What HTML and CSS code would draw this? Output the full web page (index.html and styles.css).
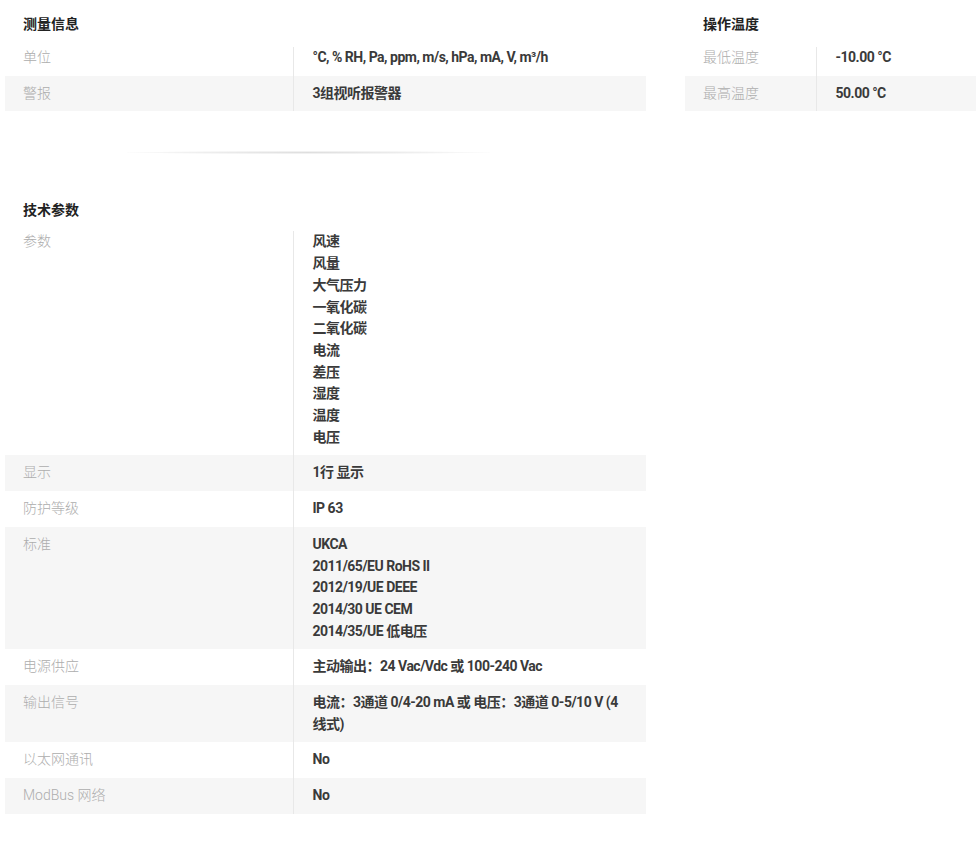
FILE: index.html
```html
<!DOCTYPE html>
<html lang="zh">
<head>
  <meta charset="UTF-8">
  <title>技术参数</title>
  <link rel="stylesheet" href="styles.css">
</head>
<body>
  <div class="page">
    <div class="top">
      <section class="spec">
        <h3>测量信息</h3>
        <table class="spec-table">
          <tr><td class="label">单位</td><td class="value">°C, % RH, Pa, ppm, m/s, hPa, mA, V, m³/h</td></tr>
          <tr><td class="label">警报</td><td class="value">3组视听报警器</td></tr>
        </table>
      </section>
      <section class="spec spec-side">
        <h3>操作温度</h3>
        <table class="spec-table">
          <tr><td class="label">最低温度</td><td class="value">-10.00 °C</td></tr>
          <tr><td class="label">最高温度</td><td class="value">50.00 °C</td></tr>
        </table>
      </section>
    </div>

    <div class="sep"></div>

    <section class="spec spec-main">
      <h3>技术参数</h3>
      <table class="spec-table">
        <tr>
          <td class="label">参数</td>
          <td class="value">风速<br>风量<br>大气压力<br>一氧化碳<br>二氧化碳<br>电流<br>差压<br>湿度<br>温度<br>电压</td>
        </tr>
        <tr><td class="label">显示</td><td class="value">1行 显示</td></tr>
        <tr><td class="label">防护等级</td><td class="value">IP 63</td></tr>
        <tr>
          <td class="label">标准</td>
          <td class="value">UKCA<br>2011/65/EU RoHS II<br>2012/19/UE DEEE<br>2014/30 UE CEM<br>2014/35/UE 低电压</td>
        </tr>
        <tr><td class="label">电源供应</td><td class="value">主动输出：24 Vac/Vdc 或 100-240 Vac</td></tr>
        <tr><td class="label">输出信号</td><td class="value">电流：3通道 0/4-20 mA 或 电压：3通道 0-5/10 V (4线式)</td></tr>
        <tr><td class="label">以太网通讯</td><td class="value">No</td></tr>
        <tr><td class="label">ModBus 网络</td><td class="value">No</td></tr>
      </table>
    </section>
  </div>
</body>
</html>
```

FILE: styles.css
```css
body { margin: 0; background: #fff; font-family: Roboto, "Noto Sans CJK SC", sans-serif; font-size: 13px; color: #333; }
.page { padding: 0 0 30px 5px; }
.top { display: grid; grid-template-columns: 641px 291px; column-gap: 39px; }
.spec h3 { margin: 14px 0 13px; padding-left: 18px; font-size: 14px; line-height: 20px; font-weight: 700; color: #222; }
.spec-main { width: 641px; }
.spec-main h3 { margin: 0 0 11px; }
.spec-table { width: 100%; border-collapse: collapse; table-layout: fixed; }
.spec-table td { padding: 7px 18px; line-height: 21.7px; vertical-align: top; }
.spec-table tr:first-child td { padding-top: 0; }
.spec-table tr:nth-child(even) td { background: #f6f6f6; }
.spec-table .label { width: 288px; box-sizing: border-box; color: #adadad; font-size: 14px; font-weight: 300; border-right: 1px solid #e8e8e8; }
.spec-table .value { padding-left: 19px; color: #3a3a3a; font-size: 14px; font-weight: 700; letter-spacing: -0.5px; }
.spec-side .label { width: 131px; }
.sep { width: 363px; height: 3px; margin: 40px 0 46px 122px; background: radial-gradient(ellipse at center, rgba(0,0,0,0.13) 0%, rgba(0,0,0,0.05) 50%, rgba(0,0,0,0) 75%); }
```
